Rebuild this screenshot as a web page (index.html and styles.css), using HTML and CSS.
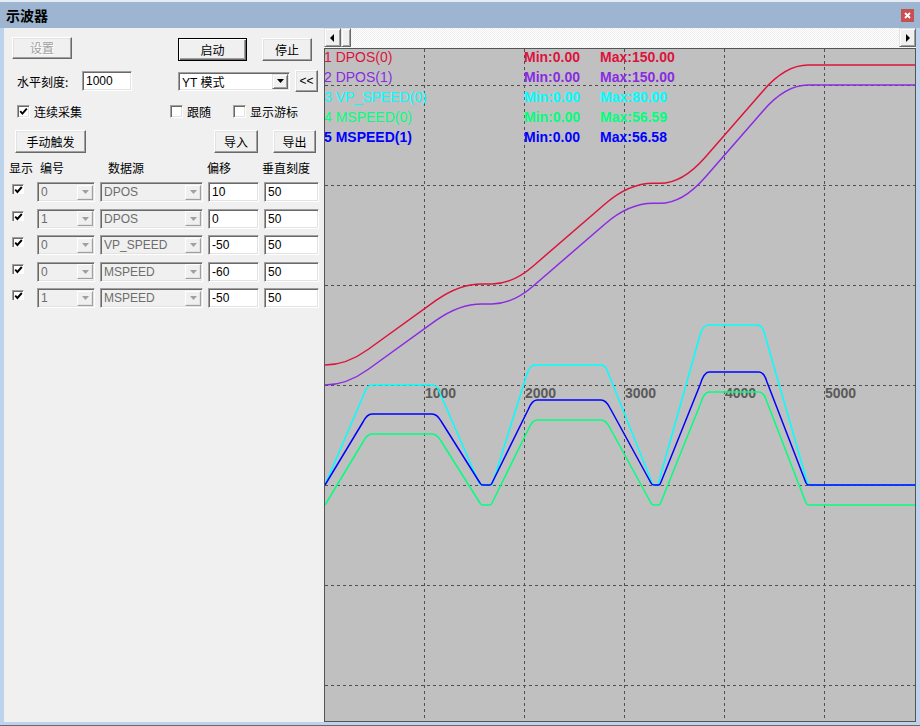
FILE: index.html
```html
<!DOCTYPE html>
<html>
<head>
<meta charset="utf-8">
<title>示波器</title>
<link rel="stylesheet" href="styles.css">
</head>
<body>
<div class="window">
  <div class="titlebar">
    <span class="title">示波器</span>
    <span class="close"><svg width="7" height="7" viewBox="0 0 7 7"><path d="M1 1 L6 6 M6 1 L1 6" class="xmark"/></svg></span>
  </div>
  <div class="client">
    <div class="panel">
      <div class="row r1">
        <div class="btn dis b-set">设置</div>
        <div class="btn def b-start">启动</div>
        <div class="btn b-stop">停止</div>
      </div>
      <div class="row r2">
        <span class="lbl">水平刻度:</span>
        <div class="edit e-scale">1000</div>
        <div class="combo c-mode"><span class="ctext">YT 模式</span><span class="drop"><svg width="7" height="4" viewBox="0 0 7 4"><polygon points="0,0 7,0 3.5,4" class="tri"/></svg></span></div>
        <div class="btn b-back">&lt;&lt;</div>
      </div>
      <div class="row r3">
        <div class="chk c1"><span class="box"><svg width="9" height="9" viewBox="0 0 9 9"><path d="M1.2 4.2 L3.4 6.6 L7.8 1.6" class="tick"/></svg></span>连续采集</div>
        <div class="chk c2"><span class="box"></span>跟随</div>
        <div class="chk c3"><span class="box"></span>显示游标</div>
      </div>
      <div class="row r4">
        <div class="btn b-trig">手动触发</div>
        <div class="btn b-imp">导入</div>
        <div class="btn b-exp">导出</div>
      </div>
      <div class="table">
        <span class="th h1">显示</span>
        <span class="th h2">编号</span>
        <span class="th h3">数据源</span>
        <span class="th h4">偏移</span>
        <span class="th h5">垂直刻度</span>

        <span class="cell"><span class="box sm"><svg width="9" height="8" viewBox="0 0 9 8"><path d="M1.2 3.6 L3.4 6 L7.8 1" class="tick"/></svg></span></span>
        <div class="combo dis cb-n"><span class="ctext">0</span><span class="drop"><svg width="7" height="4" viewBox="0 0 7 4"><polygon points="0,0 7,0 3.5,4" class="tri"/></svg></span></div>
        <div class="combo dis cb-s"><span class="ctext">DPOS</span><span class="drop"><svg width="7" height="4" viewBox="0 0 7 4"><polygon points="0,0 7,0 3.5,4" class="tri"/></svg></span></div>
        <div class="edit e-off">10</div>
        <div class="edit e-vs">50</div>

        <span class="cell"><span class="box sm"><svg width="9" height="8" viewBox="0 0 9 8"><path d="M1.2 3.6 L3.4 6 L7.8 1" class="tick"/></svg></span></span>
        <div class="combo dis cb-n"><span class="ctext">1</span><span class="drop"><svg width="7" height="4" viewBox="0 0 7 4"><polygon points="0,0 7,0 3.5,4" class="tri"/></svg></span></div>
        <div class="combo dis cb-s"><span class="ctext">DPOS</span><span class="drop"><svg width="7" height="4" viewBox="0 0 7 4"><polygon points="0,0 7,0 3.5,4" class="tri"/></svg></span></div>
        <div class="edit e-off">0</div>
        <div class="edit e-vs">50</div>

        <span class="cell"><span class="box sm"><svg width="9" height="8" viewBox="0 0 9 8"><path d="M1.2 3.6 L3.4 6 L7.8 1" class="tick"/></svg></span></span>
        <div class="combo dis cb-n"><span class="ctext">0</span><span class="drop"><svg width="7" height="4" viewBox="0 0 7 4"><polygon points="0,0 7,0 3.5,4" class="tri"/></svg></span></div>
        <div class="combo dis cb-s"><span class="ctext">VP_SPEED</span><span class="drop"><svg width="7" height="4" viewBox="0 0 7 4"><polygon points="0,0 7,0 3.5,4" class="tri"/></svg></span></div>
        <div class="edit e-off">-50</div>
        <div class="edit e-vs">50</div>

        <span class="cell"><span class="box sm"><svg width="9" height="8" viewBox="0 0 9 8"><path d="M1.2 3.6 L3.4 6 L7.8 1" class="tick"/></svg></span></span>
        <div class="combo dis cb-n"><span class="ctext">0</span><span class="drop"><svg width="7" height="4" viewBox="0 0 7 4"><polygon points="0,0 7,0 3.5,4" class="tri"/></svg></span></div>
        <div class="combo dis cb-s"><span class="ctext">MSPEED</span><span class="drop"><svg width="7" height="4" viewBox="0 0 7 4"><polygon points="0,0 7,0 3.5,4" class="tri"/></svg></span></div>
        <div class="edit e-off">-60</div>
        <div class="edit e-vs">50</div>

        <span class="cell"><span class="box sm"><svg width="9" height="8" viewBox="0 0 9 8"><path d="M1.2 3.6 L3.4 6 L7.8 1" class="tick"/></svg></span></span>
        <div class="combo dis cb-n"><span class="ctext">1</span><span class="drop"><svg width="7" height="4" viewBox="0 0 7 4"><polygon points="0,0 7,0 3.5,4" class="tri"/></svg></span></div>
        <div class="combo dis cb-s"><span class="ctext">MSPEED</span><span class="drop"><svg width="7" height="4" viewBox="0 0 7 4"><polygon points="0,0 7,0 3.5,4" class="tri"/></svg></span></div>
        <div class="edit e-off">-50</div>
        <div class="edit e-vs">50</div>
      </div>
    </div>

    <div class="scope">
      <div class="hscroll">
        <div class="sbtn"><svg width="5" height="8" viewBox="0 0 5 8"><polygon points="4,0 4,8 0,4" class="arrow"/></svg></div>
        <div class="thumb"></div>
        <div class="track"></div>
        <div class="sbtn"><svg width="5" height="8" viewBox="0 0 5 8"><polygon points="1,0 1,8 5,4" class="arrow"/></svg></div>
      </div>
      <div class="chart">
        <svg class="plot" width="590" height="672" viewBox="325 49 590 672">
          <g class="grid">
            <line x1="424.5" y1="49" x2="424.5" y2="721"/>
            <line x1="524.5" y1="49" x2="524.5" y2="721"/>
            <line x1="624.5" y1="49" x2="624.5" y2="721"/>
            <line x1="724.5" y1="49" x2="724.5" y2="721"/>
            <line x1="824.5" y1="49" x2="824.5" y2="721"/>
            <line x1="325" y1="85.5" x2="915" y2="85.5"/>
            <line x1="325" y1="185.5" x2="915" y2="185.5"/>
            <line x1="325" y1="285.5" x2="915" y2="285.5"/>
            <line x1="325" y1="385.5" x2="915" y2="385.5"/>
            <line x1="325" y1="485.5" x2="915" y2="485.5"/>
            <line x1="325" y1="585.5" x2="915" y2="585.5"/>
            <line x1="325" y1="685.5" x2="915" y2="685.5"/>
          </g>
          <g class="axis">
            <text x="425" y="398">1000</text>
            <text x="525" y="398">2000</text>
            <text x="625" y="398">3000</text>
            <text x="725" y="398">4000</text>
            <text x="825" y="398">5000</text>
          </g>
          <path class="ln red" d="M325,365 Q346.5,365 368,349.5 L436,300.45 Q459,283.9 482,283.9 L492,283.9 Q512.5,283.9 533,266.2 L605,204 Q629,183.3 653,183.3 L660,183.3 Q682.5,183.3 705,157.5 L763,90.9 Q785.5,65.1 808,65.1 L915,65.1"/>
          <path class="ln purple" d="M325,385 Q346.5,385 368,369.5 L436,320.45 Q459,303.9 482,303.9 L492,303.9 Q512.5,303.9 533,286.2 L605,224 Q629,203.3 653,203.3 L660,203.3 Q682.5,203.3 705,177.5 L763,110.9 Q785.5,85.1 808,85.1 L915,85.1"/>
          <path class="ln cyan" d="M325,485 L364,394 Q367,385 372,385 L432,385 Q437,385 439,391 L479,483 Q480,485 482,485 L491,485 Q492,485 493,482 L527,374 Q530,365 535,365 L600,365 Q605,365 607,370 L651,480 Q652,485 654,485 L657,485 Q658,485 659,481 L700,335 Q703,325 708,325 L757,325 Q762,325 764,332 L806,478 Q808,485 810,485 L915,485"/>
          <path class="ln green" d="M325,505 L363,442 Q367,434 372,434 L432,434 Q437,434 441,441 L480,503 Q481,505 483,505 L490,505 Q491,505 492,503 L528,430 Q532,420 537,420 L601,420 Q606,420 610,428 L651,503 Q652,505 654,505 L659,505 Q660,505 661,502 L700,405 Q704,392 709,392 L759,392 Q764,392 767,402 L806,503 Q807,505 809,505 L915,505"/>
          <path class="ln blue" d="M325,485 L363,422 Q367,414 372,414 L432,414 Q437,414 441,421 L480,483 Q481,485 483,485 L490,485 Q491,485 492,483 L528,410 Q532,400 537,400 L601,400 Q606,400 610,408 L651,483 Q652,485 654,485 L659,485 Q660,485 661,482 L700,385 Q704,372 709,372 L759,372 Q764,372 767,382 L806,483 Q807,485 809,485 L915,485"/>
          <g class="legend">
            <text class="t-red" x="324" y="62">1 DPOS(0)</text>
            <text class="t-red b" x="524" y="62">Min:0.00</text>
            <text class="t-red b" x="600" y="62">Max:150.00</text>
            <text class="t-purple" x="324" y="82">2 DPOS(1)</text>
            <text class="t-purple b" x="524" y="82">Min:0.00</text>
            <text class="t-purple b" x="600" y="82">Max:150.00</text>
            <text class="t-cyan" x="324" y="102">3 VP_SPEED(0)</text>
            <text class="t-cyan b" x="524" y="102">Min:0.00</text>
            <text class="t-cyan b" x="600" y="102">Max:80.00</text>
            <text class="t-green" x="324" y="122">4 MSPEED(0)</text>
            <text class="t-green b" x="524" y="122">Min:0.00</text>
            <text class="t-green b" x="600" y="122">Max:56.59</text>
            <text class="t-blue b" x="324" y="142">5 MSPEED(1)</text>
            <text class="t-blue b" x="524" y="142">Min:0.00</text>
            <text class="t-blue b" x="600" y="142">Max:56.58</text>
          </g>
        </svg>
      </div>
    </div>
  </div>
</div>
</body>
</html>
```
FILE: styles.css
```css
* { box-sizing: border-box; }
html, body { margin: 0; padding: 0; }
body {
  width: 920px;
  height: 726px;
  overflow: hidden;
  font-family: "Liberation Sans", "Noto Sans CJK SC", sans-serif;
  font-size: 12px;
  color: #000;
  background: #bcd3eb;
}
.window {
  width: 920px;
  height: 726px;
  display: flex;
  flex-direction: column;
  background: #bcd3eb;
  border-top: 2px solid #e6ecf3;
  border-bottom: 1px solid #6a6a6a;
}
.titlebar {
  flex: none;
  height: 26px;
  background: #9db5d0;
  display: flex;
  align-items: center;
  justify-content: space-between;
  padding: 0 6px;
}
.title {
  font-family: "Noto Sans CJK SC", sans-serif;
  font-weight: bold;
  font-size: 14px;
  line-height: 1;
}
.close {
  width: 13px;
  height: 13px;
  background: #c75050;
  display: flex;
  align-items: center;
  justify-content: center;
}
.xmark { stroke: #fff; stroke-width: 1.8; fill: none; }
.client {
  flex: none;
  height: 694px;
  display: flex;
  padding: 0 4px;
}
.panel {
  flex: none;
  width: 320px;
  background: #f0f0f0;
  display: flex;
  flex-direction: column;
}
.row { display: flex; flex: none; }
.r1 { margin-top: 9px; height: 24px; align-items: flex-start; }
.r2 { margin-top: 9px; height: 22px; align-items: center; }
.r3 { margin-top: 12px; height: 14px; align-items: center; }
.r4 { margin-top: 12px; height: 23px; align-items: center; }

.btn {
  flex: none;
  display: flex;
  align-items: center;
  justify-content: center;
  background: #f0f0f0;
  border: 1px solid;
  border-color: #fff #696969 #696969 #fff;
  box-shadow: inset -1px -1px #a0a0a0, inset 1px 1px #e3e3e3;
  font-family: "Noto Sans CJK SC", sans-serif;
  font-size: 12px;
  line-height: 1;
}
.btn.def {
  border: 1px solid #000;
  box-shadow: inset 1px 1px #fff, inset -1px -1px #696969, inset -2px -2px #a0a0a0;
}
.btn.dis { color: #a0a0a0; text-shadow: 1px 1px #fff; }
.b-set { margin-left: 8px; width: 60px; height: 22px; }
.b-start { margin-left: 106px; margin-top: 1px; width: 69px; height: 23px; }
.b-stop { margin-left: 15px; margin-top: 1px; width: 50px; height: 23px; }
.b-back { margin-left: 5px; width: 23px; height: 22px; font-family: "Liberation Sans", sans-serif; }
.b-trig { margin-left: 11px; width: 71px; height: 23px; }
.b-imp { margin-left: 128px; width: 44px; height: 23px; }
.b-exp { margin-left: 15px; width: 43px; height: 23px; }

.lbl {
  flex: none;
  margin-left: 13px;
  width: 65px;
  font-family: "Noto Sans CJK SC", sans-serif;
  font-size: 12px;
}
.edit {
  flex: none;
  height: 20px;
  background: #fff;
  border: 1px solid;
  border-color: #a0a0a0 #fff #fff #a0a0a0;
  box-shadow: inset 1px 1px #696969, inset -1px -1px #e3e3e3;
  display: flex;
  align-items: center;
  padding-left: 3px;
  font-size: 12px;
}
.e-scale { width: 50px; }
.combo {
  flex: none;
  height: 19px;
  background: #fff;
  border: 1px solid;
  border-color: #a0a0a0 #fff #fff #a0a0a0;
  box-shadow: inset 1px 1px #696969, inset -1px -1px #e3e3e3;
  display: flex;
  align-items: center;
  padding: 0 1px 0 3px;
}
.ctext { flex: 1; font-family: "Liberation Sans", "Noto Sans CJK SC", sans-serif; font-size: 12px; white-space: nowrap; overflow: hidden; }
.drop {
  flex: none;
  width: 16px;
  height: 15px;
  background: #f0f0f0;
  border: 1px solid;
  border-color: #e3e3e3 #696969 #696969 #e3e3e3;
  box-shadow: inset 1px 1px #fff, inset -1px -1px #a0a0a0;
  display: flex;
  align-items: center;
  justify-content: center;
}
.tri { fill: #000; }
.c-mode { margin-left: 46px; width: 112px; }
.combo.dis {
  height: 20px;
  background: #f0f0f0;
  color: #6d6d6d;
}
.combo.dis .drop {
  border-color: #fff #a0a0a0 #a0a0a0 #fff;
  box-shadow: inset -1px -1px #e3e3e3;
}
.combo.dis .tri { fill: #a0a0a0; }
.cb-n { width: 58px; }
.cb-s { width: 103px; }
.e-off { width: 51px; }
.e-vs { width: 55px; }

.chk {
  flex: none;
  display: flex;
  align-items: center;
  gap: 4px;
  font-family: "Noto Sans CJK SC", sans-serif;
  font-size: 12px;
}
.c1 { margin-left: 13px; width: 153px; }
.c2 { width: 63px; }
.box {
  flex: none;
  width: 13px;
  height: 13px;
  background: #fff;
  border: 1px solid;
  border-color: #a0a0a0 #fff #fff #a0a0a0;
  box-shadow: inset 1px 1px #696969, inset -1px -1px #e3e3e3;
  display: flex;
  align-items: center;
  justify-content: center;
}
.tick { stroke: #000; stroke-width: 1.9; fill: none; }
.box.sm {
  width: 12px;
  height: 10px;
  border-bottom: none;
  box-shadow: inset 1px 1px #696969;
  margin: 2px 0 0 8px;
  align-items: flex-start;
  padding-top: 1px;
}

.table {
  margin-top: 6px;
  display: grid;
  grid-template-columns: 33px 63px 108px 56px 55px;
  grid-template-rows: 16.5px repeat(5, 20px);
  row-gap: 6.5px;
}
.th {
  font-family: "Noto Sans CJK SC", sans-serif;
  font-size: 12px;
  display: flex;
  align-items: center;
}
.h1 { padding-left: 5px; }
.h2 { padding-left: 3px; }
.h3 { padding-left: 8px; }
.h4 { margin-left: -1px; }
.h5 { margin-left: -2px; }
.cell { display: flex; align-items: flex-start; }

.scope {
  flex: none;
  width: 592px;
  display: flex;
  flex-direction: column;
}
.hscroll {
  flex: none;
  height: 20px;
  display: flex;
  background: repeating-conic-gradient(#ffffff 0 25%, #eeeeee 0 50%) 0 0 / 2px 2px;
}
.sbtn {
  flex: none;
  width: 17px;
  height: 19px;
  background: #f0f0f0;
  border: 1px solid;
  border-color: #e3e3e3 #696969 #696969 #e3e3e3;
  box-shadow: inset 1px 1px #fff, inset -1px -1px #a0a0a0;
  display: flex;
  align-items: center;
  justify-content: center;
}
.arrow { fill: #000; }
.thumb {
  flex: none;
  width: 10px;
  height: 19px;
  background: #f0f0f0;
  border: 1px solid;
  border-color: #e3e3e3 #696969 #696969 #e3e3e3;
  box-shadow: inset 1px 1px #fff, inset -1px -1px #a0a0a0;
}
.track { flex: 1; }
.chart {
  flex: none;
  height: 674px;
  border: 1px solid #555;
  background: #c0c0c0;
}
.plot { display: block; }
.grid line { stroke: #505050; stroke-width: 1; stroke-dasharray: 3 3; }
.axis text {
  font-family: "Liberation Sans", sans-serif;
  font-size: 14px;
  font-weight: bold;
  fill: #5a5a5a;
}
.ln { fill: none; stroke-width: 1.5; stroke-linejoin: round; }
.red { stroke: #dc143c; }
.purple { stroke: #8a2be2; }
.cyan { stroke: #00ffff; }
.green { stroke: #00ff7f; }
.blue { stroke: #0000ff; }
.legend text {
  font-family: "Liberation Sans", sans-serif;
  font-size: 14px;
}
.legend text.b { font-weight: bold; }
.t-red { fill: #dc143c; }
.t-purple { fill: #8a2be2; }
.t-cyan { fill: #00ffff; }
.t-green { fill: #00ff7f; }
.t-blue { fill: #0000ff; }
```
